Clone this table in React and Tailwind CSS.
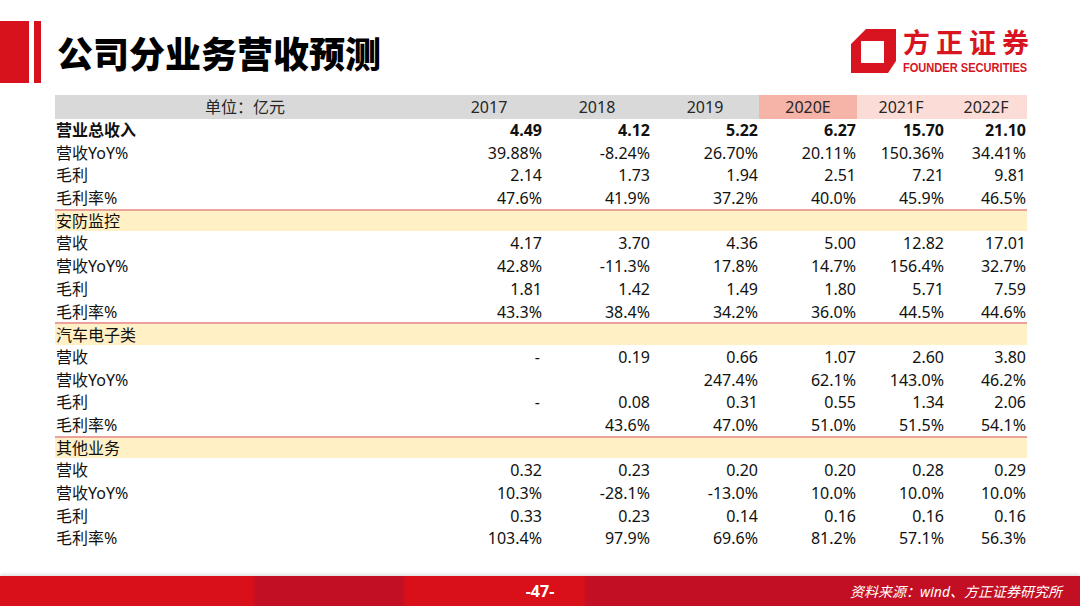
import React from 'react';

const COLS = 'grid grid-cols-[380px_108px_108px_108px_98px_88px_82px]';

const rows = [
  { label: '营业总收入', bold: true, v: ['4.49', '4.12', '5.22', '6.27', '15.70', '21.10'] },
  { label: '营收YoY%', v: ['39.88%', '-8.24%', '26.70%', '20.11%', '150.36%', '34.41%'] },
  { label: '毛利', v: ['2.14', '1.73', '1.94', '2.51', '7.21', '9.81'] },
  { label: '毛利率%', v: ['47.6%', '41.9%', '37.2%', '40.0%', '45.9%', '46.5%'] },
  { section: '安防监控' },
  { label: '营收', v: ['4.17', '3.70', '4.36', '5.00', '12.82', '17.01'] },
  { label: '营收YoY%', v: ['42.8%', '-11.3%', '17.8%', '14.7%', '156.4%', '32.7%'] },
  { label: '毛利', v: ['1.81', '1.42', '1.49', '1.80', '5.71', '7.59'] },
  { label: '毛利率%', v: ['43.3%', '38.4%', '34.2%', '36.0%', '44.5%', '44.6%'] },
  { section: '汽车电子类' },
  { label: '营收', v: ['-', '0.19', '0.66', '1.07', '2.60', '3.80'] },
  { label: '营收YoY%', v: ['', '', '247.4%', '62.1%', '143.0%', '46.2%'] },
  { label: '毛利', v: ['-', '0.08', '0.31', '0.55', '1.34', '2.06'] },
  { label: '毛利率%', v: ['', '43.6%', '47.0%', '51.0%', '51.5%', '54.1%'] },
  { section: '其他业务' },
  { label: '营收', v: ['0.32', '0.23', '0.20', '0.20', '0.28', '0.29'] },
  { label: '营收YoY%', v: ['10.3%', '-28.1%', '-13.0%', '10.0%', '10.0%', '10.0%'] },
  { label: '毛利', v: ['0.33', '0.23', '0.14', '0.16', '0.16', '0.16'] },
  { label: '毛利率%', v: ['103.4%', '97.9%', '69.6%', '81.2%', '57.1%', '56.3%'] },
];

function Logo() {
  return (
    <div className="flex items-start gap-[7px]">
      <svg width="45" height="44" viewBox="0 0 45 44" className="mt-[1px]">
        <path d="M15 0 H45 V32 L37 44 H0 V15 Z M10 12 V34 H33 V12 Z" fill="#d7141f" fillRule="evenodd" />
      </svg>
      <div className="flex flex-col items-start">
        <span className="text-[27px] leading-[28px] font-bold tracking-[6px] text-[#d7141f] font-['Noto_Sans_CJK_SC',sans-serif]">
          方正证券
        </span>
        <span className="mt-[5px] text-[13.5px] leading-[14px] font-bold text-[#d7141f] font-['Liberation_Sans',sans-serif] whitespace-nowrap origin-left scale-x-[0.82] w-[125px]">
          FOUNDER SECURITIES
        </span>
      </div>
    </div>
  );
}

function Row({ row }) {
  if (row.section) {
    return (
      <div className="h-[22.7px] bg-[#fff0c6] border-t-2 border-[#eaa29a] flex items-center pl-[1px] text-[16px] text-[#111]">
        {row.section}
      </div>
    );
  }
  return (
    <div className={`${COLS} h-[22.7px] items-center text-[16px] text-[#111] ${row.bold ? 'font-bold' : ''}`}>
      <div className="pl-[1px]">{row.label}</div>
      {row.v.map((val, i) => (
        <div key={i} className={`text-right ${val === '-' ? 'pr-[3px]' : 'pr-[1px]'}`}>
          {val}
        </div>
      ))}
    </div>
  );
}

export default function App() {
  return (
    <div className="w-[1080px] h-[606px] bg-white flex flex-col overflow-hidden font-['Noto_Sans','Noto_Sans_CJK_SC',sans-serif]">
      <div className="h-[95px] flex items-start shrink-0">
        <div className="flex gap-[5px] pt-[21px]">
          <div className="w-[29px] h-[62px] bg-[#d8121d]" />
          <div className="w-[7px] h-[62px] bg-[#d8121d]" />
        </div>
        <h1 className="ml-[16px] mt-[33px] text-[36px] leading-[38px] font-black text-black font-['Noto_Sans_CJK_SC',sans-serif]">
          公司分业务营收预测
        </h1>
        <div className="ml-auto mr-[45px] mt-[28px]">
          <Logo />
        </div>
      </div>

      <div className="ml-[55px] w-[972px]">
        <div className={`${COLS} h-[23px] items-center text-[16px] text-[#262626]`}>
          <div className="h-full bg-[#d9d9d9] flex items-center justify-center">单位：亿元</div>
          <div className="h-full bg-[#d9d9d9] flex items-center justify-center">2017</div>
          <div className="h-full bg-[#d9d9d9] flex items-center justify-center">2018</div>
          <div className="h-full bg-[#d9d9d9] flex items-center justify-center">2019</div>
          <div className="h-full bg-[#f5b4a7] flex items-center justify-center">2020E</div>
          <div className="h-full bg-[#fcdcd6] flex items-center justify-center">2021F</div>
          <div className="h-full bg-[#fcdcd6] flex items-center justify-center">2022F</div>
        </div>
        {rows.map((row, i) => (
          <Row key={i} row={row} />
        ))}
      </div>

      <div className="mt-auto h-[30px] shrink-0 grid grid-cols-3 items-center text-white shadow-[0_-2px_3px_rgba(0,0,0,0.12)] bg-[linear-gradient(90deg,#d90f1a_0px,#d90f1a_252px,#c30f24_256px,#c30f24_402px,#d90f1a_406px,#d90f1a_583px,#c30f24_587px,#c30f24_100%)]">
        <div />
        <div className="text-center text-[16px] font-bold">-47-</div>
        <div className="text-right pr-[18px] text-[14px] italic font-['Noto_Sans','Noto_Sans_CJK_SC',sans-serif]">
          资料来源：wind、方正证券研究所
        </div>
      </div>
    </div>
  );
}
